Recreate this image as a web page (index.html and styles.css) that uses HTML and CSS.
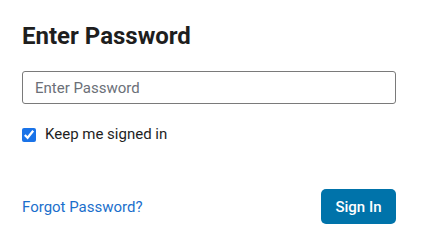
FILE: index.html
```html
<!DOCTYPE html>
<html>
<head>
<meta charset="utf-8">
<link rel="stylesheet" href="styles.css">
</head>
<body>
<form class="card">
  <h1 class="title">Enter Password</h1>
  <input class="field" type="password" placeholder="Enter Password">
  <label class="remember"><input class="check" type="checkbox" checked> Keep me signed in</label>
  <div class="actions">
    <a class="link" href="#">Forgot Password?</a>
    <button class="btn" type="button">Sign In</button>
  </div>
</form>
</body>
</html>
```
FILE: styles.css
```css
html, body {
  margin: 0;
  padding: 0;
  background: #fff;
}
body {
  font-family: Roboto, "Liberation Sans", sans-serif;
  color: #1f1f1f;
}
.card {
  width: 374px;
  padding: 22px 31px 0 22px;
  display: flex;
  flex-direction: column;
}
.title {
  margin: 0;
  font-size: 24px;
  line-height: 28px;
  font-weight: 700;
  color: #1e1e1e;
}
.field {
  margin-top: 21px;
  box-sizing: border-box;
  width: 374px;
  height: 33px;
  border: 1px solid #7a7a7a;
  border-radius: 3px;
  padding: 0 12px;
  font-family: inherit;
  font-size: 15px;
  color: #1e1e1e;
  outline: none;
}
.field::placeholder {
  color: #6b7078;
}
.remember {
  margin-top: 21px;
  display: flex;
  align-items: center;
  gap: 9px;
  font-size: 15px;
  line-height: 19px;
  color: #1e1e1e;
}
.check {
  margin: 0;
  width: 14px;
  height: 14px;
  accent-color: #1a73e8;
}
.actions {
  margin-top: 45px;
  display: flex;
  justify-content: space-between;
  align-items: center;
}
.link {
  font-size: 15px;
  color: #1b6fcc;
  text-decoration: none;
}
.btn {
  height: 35px;
  width: 75px;
  border: none;
  border-radius: 5px;
  background: #0073aa;
  color: #fff;
  font-family: inherit;
  font-size: 15px;
  font-weight: 500;
  padding: 0;
}
```
